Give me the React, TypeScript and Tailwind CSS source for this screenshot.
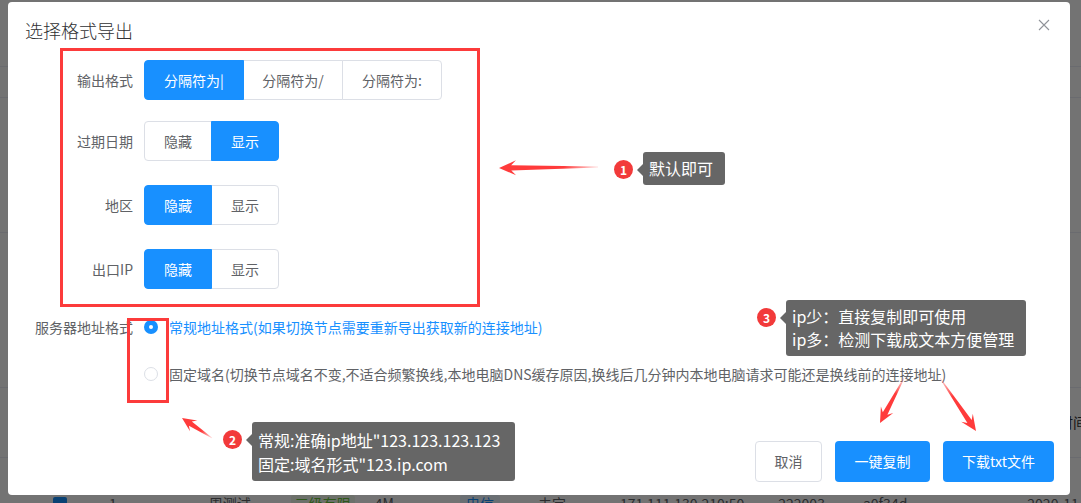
import React from "react";

const FONT = "font-['Noto_Sans_CJK_SC','Noto_Sans',sans-serif]";

function arrowPoints(tx: number, ty: number, px: number, py: number, head = 17, hw = 7.5, sw = 2.6) {
  const dx = px - tx;
  const dy = py - ty;
  const L = Math.hypot(dx, dy);
  const ux = dx / L;
  const uy = dy / L;
  const nx = -uy;
  const ny = ux;
  const se = [px - ux * head * 0.72, py - uy * head * 0.72];
  const b = [px - ux * head, py - uy * head];
  const pts = [
    [tx + nx * 0.4, ty + ny * 0.4],
    [se[0] + nx * sw, se[1] + ny * sw],
    [b[0] + nx * hw, b[1] + ny * hw],
    [px, py],
    [b[0] - nx * hw, b[1] - ny * hw],
    [se[0] - nx * sw, se[1] - ny * sw],
    [tx - nx * 0.4, ty - ny * 0.4],
  ];
  return pts.map((p) => p.map((v) => v.toFixed(1)).join(",")).join(" ");
}

const arrows = [
  { id: "a1", t: [598, 167], p: [499, 168] },
  { id: "a2", t: [212, 438], p: [182, 418], head: 14, hw: 6.5 },
  { id: "a3", t: [904, 378], p: [880, 423], head: 15, hw: 7 },
  { id: "a4", t: [940, 378], p: [976, 431], head: 16, hw: 7 },
];

function Seg({ items, active, widths }: { items: string[]; active: number; widths: string[] }) {
  return (
    <div className="flex">
      {items.map((t, i) => {
        const on = i === active;
        const first = i === 0;
        const last = i === items.length - 1;
        return (
          <div
            key={t}
            className={[
              "flex h-[40px] items-center justify-center text-[14px] border",
              widths[i],
              first ? "rounded-l-[4px]" : "-ml-px",
              last ? "rounded-r-[4px]" : "",
              on ? "bg-[#1890ff] border-[#1890ff] text-white relative" : "bg-white border-[#dcdfe6] text-[#606266]",
            ].join(" ")}
          >
            {t}
          </div>
        );
      })}
    </div>
  );
}

function Row({ label, children, className = "" }: { label: string; children: React.ReactNode; className?: string }) {
  return (
    <div className={"flex items-center " + className}>
      <div className="w-[126px] pr-[11px] text-right text-[14px] text-[#606266]">{label}</div>
      {children}
    </div>
  );
}

function Radio({ checked }: { checked: boolean }) {
  return checked ? (
    <span className="flex h-[14px] w-[14px] items-center justify-center rounded-full bg-[#1890ff]">
      <span className="h-[4px] w-[4px] rounded-full bg-white" />
    </span>
  ) : (
    <span className="h-[14px] w-[14px] rounded-full border border-[#dcdfe6] bg-white" />
  );
}

function Note({ n, lines, className, boxClass }: { n: string; lines: string[]; className: string; boxClass: string }) {
  return (
    <div className={"absolute flex items-start " + className}>
      <div className="mt-[8px] flex h-[19px] w-[19px] items-center justify-center rounded-full bg-[#f23a3a] text-[12px] font-semibold text-white">
        {n}
      </div>
      <div className="ml-[4px] mt-[12px] h-0 w-0 border-y-[6px] border-r-[6px] border-y-transparent border-r-[#666666]" />
      <div className={"rounded-[3px] bg-[#666666] text-[16px] text-white " + boxClass}>
        {lines.map((l) => (
          <div key={l} className="whitespace-nowrap">
            {l}
          </div>
        ))}
      </div>
    </div>
  );
}

export default function App() {
  return (
    <div className={"relative h-[503px] w-[1081px] overflow-hidden bg-white " + FONT}>
      {/* page beneath */}
      <div className="flex h-[503px] flex-col text-[14px] text-[#606266]">
        <div className="h-[67px] shrink-0 border-b border-[#ebeef5]" />
        <div className="h-[31px] shrink-0 border-b border-[#ebeef5]" />
        <div className="h-[135px] shrink-0 border-b border-[#ebeef5]" />
        <div className="h-[155px] shrink-0 border-b border-[#ebeef5]" />
        <div className="flex h-[70px] shrink-0 items-center justify-end border-b border-[#ebeef5]">
          <span className="mr-[-6px] text-[#303133]">时间</span>
        </div>
        <div className="flex h-[45px] shrink-0 items-start pt-[37px] leading-[16px]">
          <div className="ml-[53px] mt-[2px] h-[14px] w-[14px] shrink-0 rounded-[2px] bg-[#1890ff]" />
          <span className="ml-[42px] shrink-0">1</span>
          <span className="ml-[78px] shrink-0">一周测试</span>
          <span className="ml-[40px] shrink-0 rounded-[3px] bg-[#f0f9eb] px-[4px] text-[#67c23a]">三级有限</span>
          <span className="ml-[20px] shrink-0">4M</span>
          <span className="ml-[66px] shrink-0 rounded-[3px] bg-[#ecf5ff] px-[6px] text-[#1890ff]">电信</span>
          <span className="ml-[38px] shrink-0">未定</span>
          <span className="ml-[54px] shrink-0">171.111.130.210:50</span>
          <span className="ml-[34px] shrink-0">222003</span>
          <span className="ml-[38px] shrink-0">a0f34d</span>
          <span className="ml-[120px] shrink-0 whitespace-nowrap">2020-11-2</span>
        </div>
      </div>
      {/* backdrop */}
      <div className="absolute inset-0 bg-black/55" />

      {/* dialog */}
      <div className="absolute left-[8px] top-[2px] flex h-[493px] w-[1062px] flex-col rounded-[4px] bg-white">
        <div className="flex items-start justify-between pl-[17px] pr-[20px] pt-[16px]">
          <div className="text-[18px] font-light leading-[24px] text-[#303133]">选择格式导出</div>
          <svg className="mt-[1px]" width="12" height="12" viewBox="0 0 12 12">
            <path d="M1 1 L11 11 M11 1 L1 11" stroke="#909399" strokeWidth="1.1" fill="none" />
          </svg>
        </div>

        <div className="mt-[18px] flex flex-col pl-[10px]">
          <Row label="输出格式">
            <Seg items={["分隔符为|", "分隔符为/", "分隔符为:"]} active={0} widths={["w-[100px]", "w-[100px]", "w-[100px]"]} />
          </Row>
          <Row label="过期日期" className="mt-[21px]">
            <Seg items={["隐藏", "显示"]} active={1} widths={["w-[68px]", "w-[68px]"]} />
          </Row>
          <Row label="地区" className="mt-[24px]">
            <Seg items={["隐藏", "显示"]} active={0} widths={["w-[68px]", "w-[68px]"]} />
          </Row>
          <Row label="出口IP" className="mt-[24px]">
            <Seg items={["隐藏", "显示"]} active={0} widths={["w-[68px]", "w-[68px]"]} />
          </Row>

          <Row label="服务器地址格式" className="mt-[28px] h-[20px]">
            <div className="flex items-center">
              <Radio checked />
              <span className="ml-[11px] text-[14px] text-[#1890ff]">常规地址格式(如果切换节点需要重新导出获取新的连接地址)</span>
            </div>
          </Row>
          <Row label="" className="mt-[27px] h-[20px]">
            <div className="flex items-center">
              <Radio checked={false} />
              <span className="ml-[11px] whitespace-nowrap text-[14px] text-[#606266]">
                固定域名(切换节点域名不变,不适合频繁换线,本地电脑DNS缓存原因,换线后几分钟内本地电脑请求可能还是换线前的连接地址)
              </span>
            </div>
          </Row>
        </div>

        <div className="mt-[57px] flex justify-end gap-[13px] pr-[16px]">
          <button className="h-[41px] w-[67px] rounded-[4px] border border-[#dcdfe6] bg-white text-[14px] text-[#606266]">取消</button>
          <button className="h-[41px] w-[95px] rounded-[4px] bg-[#1890ff] text-[14px] text-white">一键复制</button>
          <button className="h-[41px] w-[111px] rounded-[4px] bg-[#1890ff] text-[14px] text-white">下载txt文件</button>
        </div>
      </div>

      {/* annotations */}
      <div className="absolute left-[60px] top-[48px] h-[259px] w-[420px] border-[3px] border-[#fc3b3b]" />
      <div className="absolute left-[127px] top-[318px] h-[85px] w-[42px] border-[3px] border-[#fc3b3b]" />

      <svg className="pointer-events-none absolute left-0 top-0" width="1081" height="503">
        <defs>
          {arrows.map((a) => (
            <linearGradient key={a.id} id={a.id} gradientUnits="userSpaceOnUse" x1={a.t[0]} y1={a.t[1]} x2={a.p[0]} y2={a.p[1]}>
              <stop offset="0" stopColor="#ff3b3b" stopOpacity="0.15" />
              <stop offset="0.35" stopColor="#ff3b3b" stopOpacity="1" />
              <stop offset="1" stopColor="#ff3b3b" stopOpacity="1" />
            </linearGradient>
          ))}
        </defs>
        {arrows.map((a) => (
          <polygon key={a.id} points={arrowPoints(a.t[0], a.t[1], a.p[0], a.p[1], a.head ?? 17, a.hw ?? 7.5)} fill={`url(#${a.id})`} />
        ))}
      </svg>

      <Note n="1" lines={["默认即可"]} className="left-[614px] top-[152px]" boxClass="h-[33px] px-[6px] py-[5px] leading-[23px] w-[82px]" />
      <Note
        n="3"
        lines={["ip少：直接复制即可使用", "ip多：检测下载成文本方便管理"]}
        className="left-[757px] top-[300px]"
        boxClass="h-[56px] w-[240px] px-[6px] py-[5px] leading-[23px]"
      />
      <Note
        n="2"
        lines={['常规:准确ip地址"123.123.123.123', '固定:域名形式"123.ip.com']}
        className="left-[223px] top-[422px]"
        boxClass="h-[59px] w-[263px] px-[6px] py-[6px] leading-[24px]"
      />
    </div>
  );
}
